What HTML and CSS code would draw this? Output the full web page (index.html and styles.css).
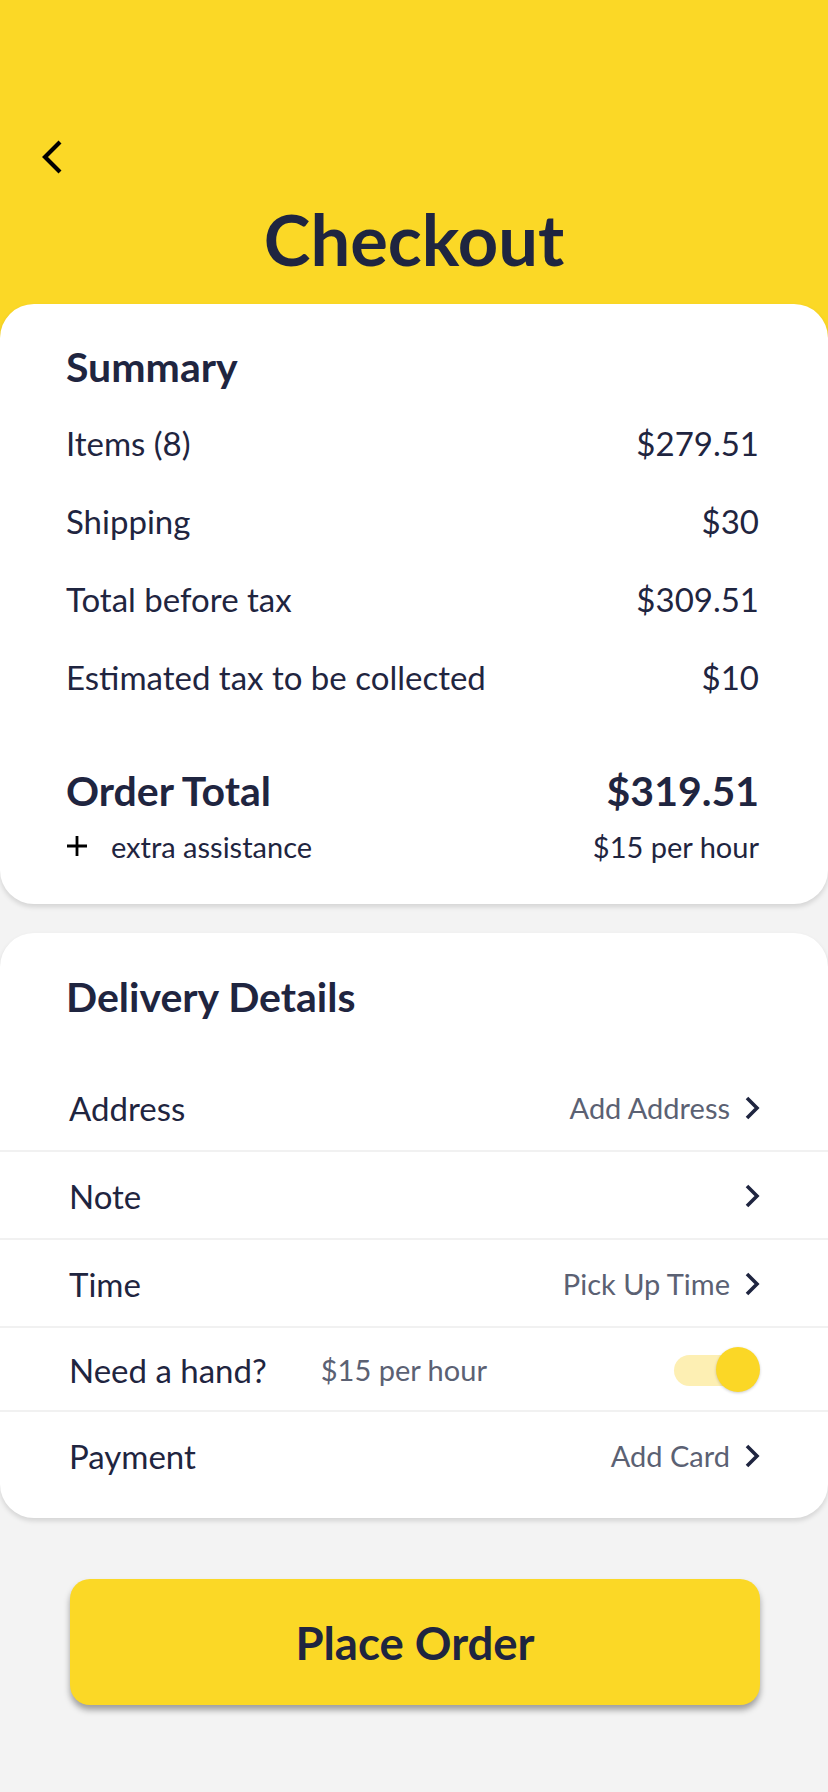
FILE: index.html
```html
<!DOCTYPE html>
<html lang="en">
<head>
<meta charset="utf-8">
<title>Checkout</title>
<link rel="stylesheet" href="styles.css">
</head>
<body>
<div class="screen">
  <header class="header">
    <button class="back" aria-label="Back">
      <svg width="22" height="34" viewBox="0 0 22 34"><path d="M19 2 L4 17 L19 32" fill="none" stroke="#000" stroke-width="4.2" stroke-linejoin="miter"/></svg>
    </button>
    <h1 class="title">Checkout</h1>
  </header>

  <section class="card summary">
    <h2 class="card-title">Summary</h2>
    <div class="line"><span>Items (8)</span><span>$279.51</span></div>
    <div class="line"><span>Shipping</span><span>$30</span></div>
    <div class="line"><span>Total before tax</span><span>$309.51</span></div>
    <div class="line"><span>Estimated tax to be collected</span><span>$10</span></div>
    <div class="total"><span>Order Total</span><span>$319.51</span></div>
    <div class="extra">
      <span class="extra-left">
        <svg class="plus" width="22" height="22" viewBox="0 0 22 22"><path d="M11 1 V21 M1 11 H21" stroke="#000" stroke-width="2.8" fill="none"/></svg>
        <span>extra assistance</span>
      </span>
      <span>$15 per hour</span>
    </div>
  </section>

  <section class="card delivery">
    <h2 class="card-title">Delivery Details</h2>
    <div class="rows">
      <div class="row">
        <span class="label">Address</span>
        <span class="value">Add Address</span>
        <svg class="chev" width="16" height="24" viewBox="0 0 16 24"><path d="M3 2 L13 12 L3 22" fill="none" stroke="#1f2540" stroke-width="3.6"/></svg>
      </div>
      <div class="row">
        <span class="label">Note</span>
        <span class="value"></span>
        <svg class="chev" width="16" height="24" viewBox="0 0 16 24"><path d="M3 2 L13 12 L3 22" fill="none" stroke="#1f2540" stroke-width="3.6"/></svg>
      </div>
      <div class="row">
        <span class="label">Time</span>
        <span class="value">Pick Up Time</span>
        <svg class="chev" width="16" height="24" viewBox="0 0 16 24"><path d="M3 2 L13 12 L3 22" fill="none" stroke="#1f2540" stroke-width="3.6"/></svg>
      </div>
      <div class="row row-hand">
        <span class="label">Need a hand?</span>
        <span class="hint">$15 per hour</span>
        <span class="toggle"><span class="track"></span><span class="knob"></span></span>
      </div>
      <div class="row row-last">
        <span class="label">Payment</span>
        <span class="value">Add Card</span>
        <svg class="chev" width="16" height="24" viewBox="0 0 16 24"><path d="M3 2 L13 12 L3 22" fill="none" stroke="#1f2540" stroke-width="3.6"/></svg>
      </div>
    </div>
  </section>

  <div class="actions">
    <button class="place">Place Order</button>
  </div>
</div>
</body>
</html>
```

FILE: styles.css
```css
* { box-sizing: border-box; }
html, body { margin: 0; padding: 0; }
body {
  background: #f3f3f3;
  font-family: Lato, "Noto Sans", sans-serif;
  color: #1f2540;
}
.screen {
  width: 828px;
  min-height: 1792px;
  background: #f3f3f3;
}
.header {
  background: #fbd826;
  padding: 140px 0 65px;
}
.back {
  display: block;
  margin: 0 0 0 41px;
  padding: 0;
  border: 0;
  background: none;
  width: 22px;
  height: 34px;
}
.back svg { display: block; }
.title {
  margin: 25px 0 0;
  text-align: center;
  font-size: 70.5px;
  line-height: 80px;
  font-weight: 700;
  color: #1f2540;
}
.card {
  background: #fff;
  border-radius: 34px;
  box-shadow: 0 3px 5px rgba(0, 0, 0, 0.13);
  position: relative;
}
.summary {
  margin-top: -40px;
  padding: 40px 69px 40px 66px;
}
.card-title {
  margin: 0;
  font-size: 41px;
  line-height: 46px;
  font-weight: 700;
}
.line {
  display: flex;
  justify-content: space-between;
  font-size: 33px;
  line-height: 78px;
}
.summary .card-title { margin-bottom: 14px; }
.total {
  display: flex;
  justify-content: space-between;
  margin-top: 52px;
  font-size: 41px;
  line-height: 46px;
  font-weight: 700;
}
.extra {
  display: flex;
  justify-content: space-between;
  align-items: center;
  margin-top: 16px;
  font-size: 29px;
  line-height: 34px;
}
.extra-left {
  display: flex;
  align-items: center;
  gap: 23px;
}
.plus { display: block; margin-top: -2px; }
.delivery {
  margin-top: 29px;
  padding: 41px 0 20px;
}
.delivery .card-title {
  padding-left: 66px;
  margin-bottom: 44px;
}
.row {
  display: flex;
  align-items: center;
  height: 88px;
  padding: 2px 68px 0 69px;
  border-bottom: 2px solid #f1f1f1;
}
.row-hand { height: 84px; }
.row-last { border-bottom: 0; height: 86px; }
.label {
  font-size: 33px;
  line-height: 38px;
  flex: 0 0 auto;
}
.value {
  margin-left: auto;
  font-size: 29px;
  line-height: 34px;
  color: #5b6173;
}
.chev {
  display: block;
  margin-left: 14px;
  flex: 0 0 auto;
}
.hint {
  margin-left: 54px;
  font-size: 29px;
  line-height: 34px;
  color: #5b6173;
}
.toggle {
  margin-left: auto;
  position: relative;
  width: 86px;
  height: 46px;
  flex: 0 0 auto;
}
.track {
  position: absolute;
  left: 0;
  top: 8px;
  width: 72px;
  height: 31px;
  border-radius: 16px;
  background: #fdefb3;
}
.knob {
  position: absolute;
  right: 0;
  top: 0;
  width: 44px;
  height: 45px;
  border-radius: 50%;
  background: #fbd726;
  box-shadow: 0 1px 3px rgba(0, 0, 0, 0.2);
}
.actions {
  padding: 61px 68px 0 70px;
}
.place {
  display: block;
  width: 100%;
  height: 126px;
  border: 0;
  border-radius: 20px;
  background: #fbd826;
  box-shadow: 0 5px 6px rgba(0, 0, 0, 0.35);
  font-family: Lato, "Noto Sans", sans-serif;
  font-size: 45.5px;
  font-weight: 700;
  color: #1f2540;
}
```
